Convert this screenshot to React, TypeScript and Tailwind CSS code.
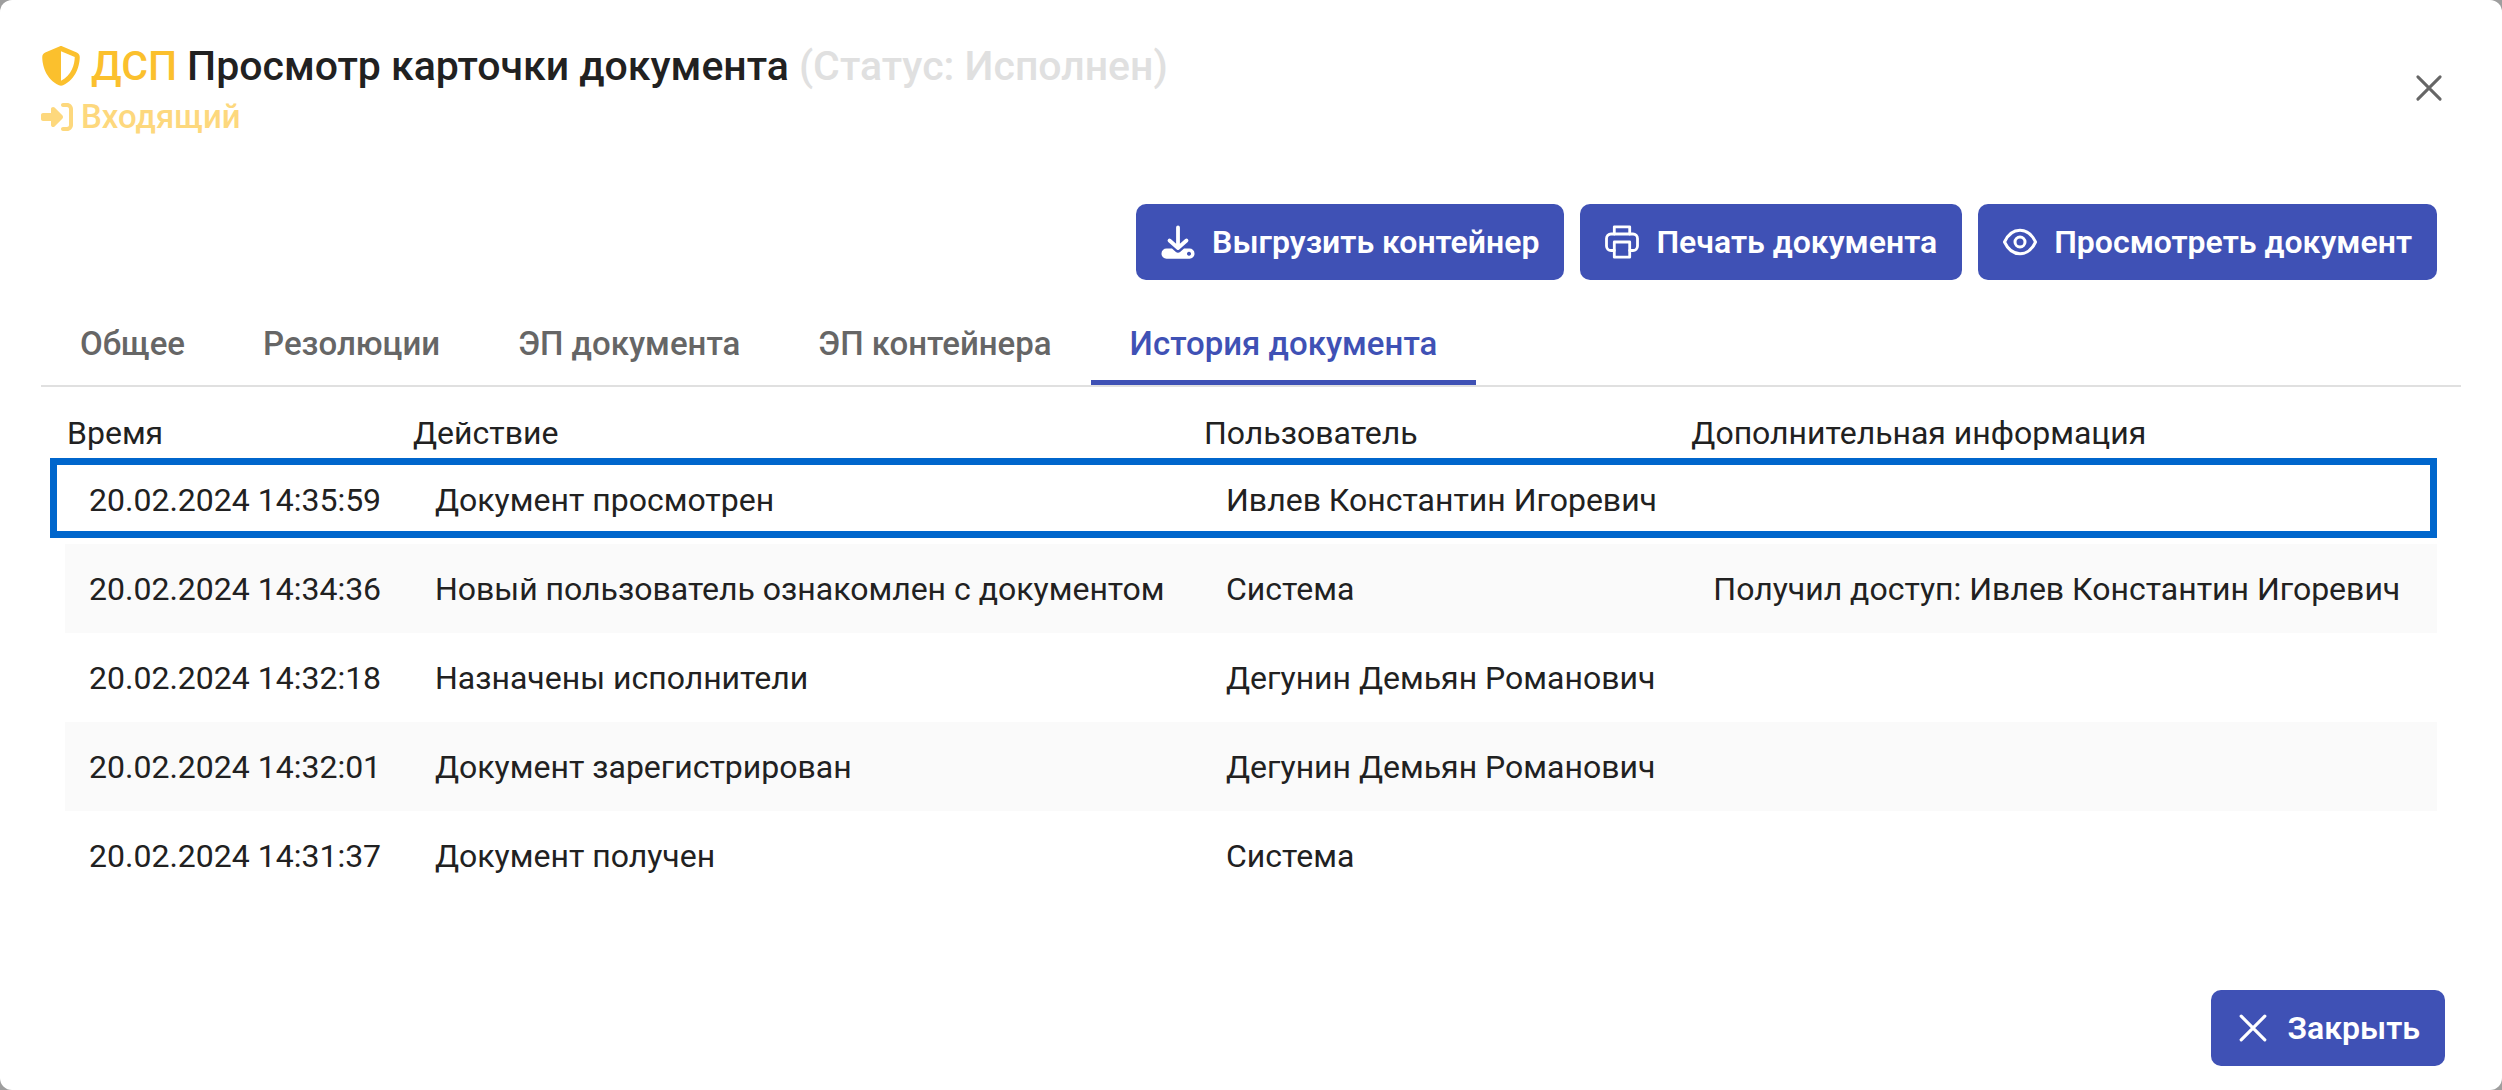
import React, { useState } from "react";
import { FaShieldHalved, FaRightToBracket } from "react-icons/fa6";

type IconProps = { className?: string };

const DownloadIcon = ({ className }: IconProps) => (
  <svg viewBox="0 0 34 34" className={className} aria-hidden="true" fill="none">
    <path
      d="M5.500 23.500h5.500l3.600 3.200a3.600 3.600 0 0 0 4.800 0l3.600-3.200h5.500a5 5 0 0 1 5 5v.3a5 5 0 0 1-5 5h-23a5 5 0 0 1-5-5v-.3a5 5 0 0 1 5-5zM28 26.700a2 2 0 1 0 .01 0z"
      fill="currentColor"
      fillRule="evenodd"
    />
    <path d="M17 2.500V22.500M8.500 15.500 17 23l8.500-7.500" stroke="currentColor" strokeWidth="3.800" strokeLinecap="round" strokeLinejoin="round" />
  </svg>
);

const PrintIcon = ({ className }: IconProps) => (
  <svg viewBox="0 0 34 34" className={className} aria-hidden="true" fill="none" stroke="currentColor" strokeWidth="2.800" strokeLinejoin="round" strokeLinecap="round">
    <path d="M9.300 9V1.800h15.400V9" />
    <path d="M9.300 25.500H6a4.500 4.500 0 0 1-4.500-4.500v-7.500A4.500 4.500 0 0 1 6 9h22a4.500 4.500 0 0 1 4.500 4.500V21a4.500 4.500 0 0 1-4.500 4.500h-3.300" />
    <path d="M9.300 17h15.400v15.200H9.300z" />
  </svg>
);

const EyeIcon = ({ className }: IconProps) => (
  <svg viewBox="0 0 34 34" className={className} aria-hidden="true" fill="none" stroke="currentColor" strokeWidth="3" strokeLinejoin="round">
    <path d="M1.500 17C5 9.500 10.500 5.300 17 5.300S29 9.500 32.500 17C29 24.500 23.500 28.700 17 28.700S5 24.500 1.500 17z" />
    <circle cx="17" cy="17" r="5" />
  </svg>
);

const CloseIcon = ({ className }: IconProps) => (
  <svg viewBox="0 0 34 34" className={className} aria-hidden="true" fill="none" stroke="currentColor" strokeWidth="3.200" strokeLinecap="round">
    <path d="M5.200 5.200 28.800 28.800M28.800 5.200 5.200 28.800" />
  </svg>
);

const actions = [
  { label: "Выгрузить контейнер", Icon: DownloadIcon },
  { label: "Печать документа", Icon: PrintIcon },
  { label: "Просмотреть документ", Icon: EyeIcon },
];

const tabs = ["Общее", "Резолюции", "ЭП документа", "ЭП контейнера", "История документа"];

const columns = ["Время", "Действие", "Пользователь", "Дополнительная информация"];

const rows = [
  ["20.02.2024 14:35:59", "Документ просмотрен", "Ивлев Константин Игоревич", ""],
  ["20.02.2024 14:34:36", "Новый пользователь ознакомлен с документом", "Система", "Получил доступ: Ивлев Константин Игоревич"],
  ["20.02.2024 14:32:18", "Назначены исполнители", "Дегунин Демьян Романович", ""],
  ["20.02.2024 14:32:01", "Документ зарегистрирован", "Дегунин Демьян Романович", ""],
  ["20.02.2024 14:31:37", "Документ получен", "Система", ""],
];

function PrimaryButton({ label, Icon }: { label: string; Icon: React.ComponentType<IconProps> }) {
  return (
    <button type="button" className="flex h-19 items-center gap-[17px] rounded-[10px] bg-[#3f51b5] px-[25px] font-semibold whitespace-nowrap text-white">
      <Icon className="size-[34px] shrink-0" />
      {label}
    </button>
  );
}

export default function App() {
  const [active, setActive] = useState(4);
  return (
    <div className="min-h-screen bg-[#9e9e9e] font-[Roboto,sans-serif] text-[32px] leading-10 text-[#212121]">
      <section role="dialog" aria-labelledby="card-title" className="flex min-h-screen flex-col rounded-xl bg-white px-[41px] pt-10 pb-6">
        <header className="flex items-start justify-between">
          <div>
            <h1 id="card-title" className="flex items-center gap-2.5 text-[41px] leading-[52px] font-medium whitespace-nowrap">
              <FaShieldHalved className="size-10 shrink-0 text-[#fbc02d]" aria-hidden="true" />
              <span className="text-[#fbc02d]">ДСП</span>
              <span>Просмотр карточки документа</span>
              <span className="text-[#e0e0e0]">(Статус: Исполнен)</span>
            </h1>
            <p className="flex items-center gap-2 text-[33px] leading-[50px] font-medium text-[#fdd87d]">
              <FaRightToBracket className="size-8 shrink-0" aria-hidden="true" />
              Входящий
            </p>
          </div>
          <button type="button" aria-label="Закрыть окно" className="mt-4 flex size-16 items-center justify-center text-[#666666]">
            <CloseIcon className="size-8" />
          </button>
        </header>

        <div className="mt-[62px] flex justify-end gap-4 pr-6">
          {actions.map((a) => (
            <PrimaryButton key={a.label} {...a} />
          ))}
        </div>

        <div role="tablist" className="mt-6 flex border-b-2 border-[#e0e0e0] text-[33px]">
          {tabs.map((tab, i) => (
            <button
              key={tab}
              type="button"
              role="tab"
              aria-selected={i === active}
              onClick={() => setActive(i)}
              className={
                i === active
                  ? "h-[81px] border-b-5 border-[#3f51b5] px-[39px] pt-1 font-medium whitespace-nowrap text-[#3f51b5]"
                  : "h-[81px] border-b-5 border-transparent px-[39px] pt-1 font-medium whitespace-nowrap text-[#666666]"
              }
            >
              {tab}
            </button>
          ))}
        </div>

        <div className="relative mt-6 px-6">
          <table className="w-full border-collapse text-left whitespace-nowrap">
            <thead>
              <tr>
                {columns.map((c) => (
                  <th key={c} scope="col" className="h-11 p-0.5 font-normal">
                    {c}
                  </th>
                ))}
              </tr>
            </thead>
            <tbody>
              {rows.map((r) => (
                <tr key={r[0]} className="even:bg-[#fafafa]">
                  {r.map((cell, i) => (
                    <td key={i} className="h-[89px] px-6">
                      {cell}
                    </td>
                  ))}
                </tr>
              ))}
            </tbody>
          </table>
          <div aria-hidden="true" className="pointer-events-none absolute top-[47px] right-6 left-[9px] h-20 border-7 border-[#0066cc]" />
        </div>

        <footer className="mt-auto flex justify-end pr-4">
          <PrimaryButton label="Закрыть" Icon={CloseIcon} />
        </footer>
      </section>
    </div>
  );
}
